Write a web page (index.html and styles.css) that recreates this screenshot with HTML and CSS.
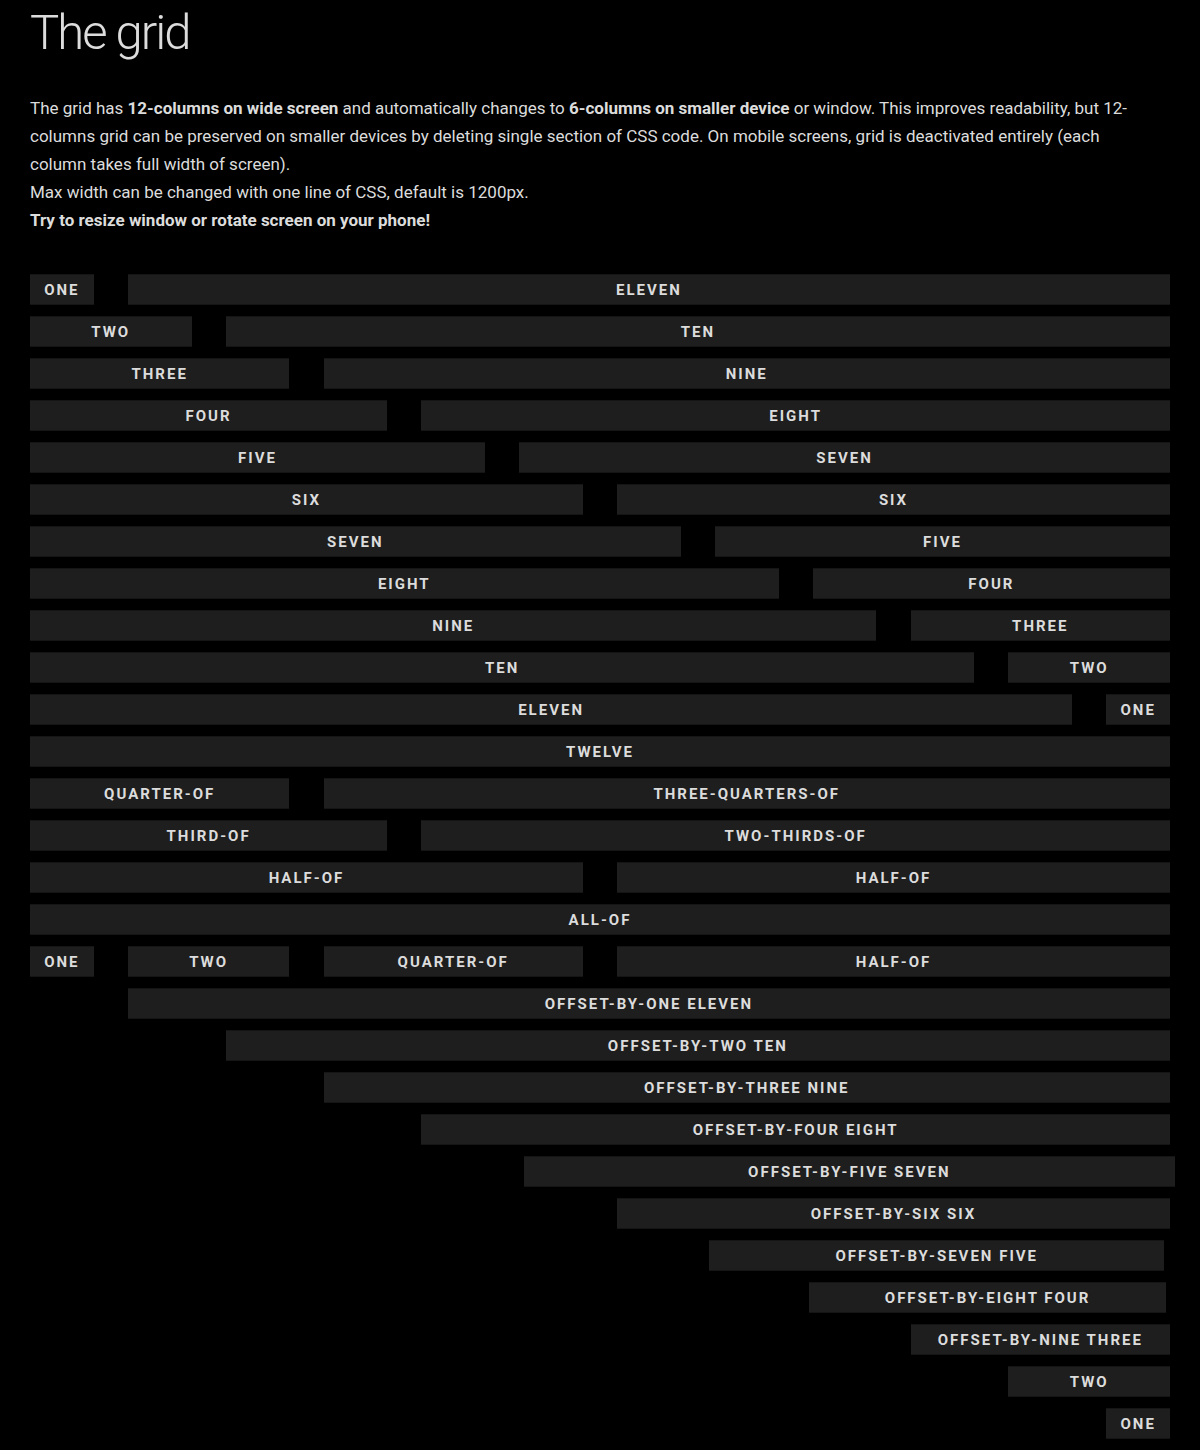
FILE: index.html
```html
<!DOCTYPE html>
<html lang="en">
<head>
<meta charset="utf-8">
<meta name="viewport" content="width=device-width, initial-scale=1">
<title>The grid</title>
<link rel="stylesheet" href="styles.css">
</head>
<body>
<main class="container">
  <h1 class="title">The grid</h1>
  <p class="intro">The grid has <strong>12-columns on wide screen</strong> and automatically changes to <strong>6-columns on smaller device</strong> or window. This improves readability, but 12-columns grid can be preserved on smaller devices by deleting single section of CSS code. On mobile screens, grid is deactivated entirely (each column takes full width of screen).<br>
  Max width can be changed with one line of CSS, default is 1200px.<br>
  <strong>Try to resize window or rotate screen on your phone!</strong></p>
  <section class="demo">
    <div class="row"><div class="col one">One</div><div class="col eleven">Eleven</div></div>
    <div class="row"><div class="col two">Two</div><div class="col ten">Ten</div></div>
    <div class="row"><div class="col three">Three</div><div class="col nine">Nine</div></div>
    <div class="row"><div class="col four">Four</div><div class="col eight">Eight</div></div>
    <div class="row"><div class="col five">Five</div><div class="col seven">Seven</div></div>
    <div class="row"><div class="col six">Six</div><div class="col six">Six</div></div>
    <div class="row"><div class="col seven">Seven</div><div class="col five">Five</div></div>
    <div class="row"><div class="col eight">Eight</div><div class="col four">Four</div></div>
    <div class="row"><div class="col nine">Nine</div><div class="col three">Three</div></div>
    <div class="row"><div class="col ten">Ten</div><div class="col two">Two</div></div>
    <div class="row"><div class="col eleven">Eleven</div><div class="col one">One</div></div>
    <div class="row"><div class="col twelve">Twelve</div></div>
    <div class="row"><div class="col three">Quarter-of</div><div class="col nine">Three-quarters-of</div></div>
    <div class="row"><div class="col four">Third-of</div><div class="col eight">Two-thirds-of</div></div>
    <div class="row"><div class="col six">Half-of</div><div class="col six">Half-of</div></div>
    <div class="row"><div class="col twelve">All-of</div></div>
    <div class="row"><div class="col one">One</div><div class="col two">Two</div><div class="col three">Quarter-of</div><div class="col six">Half-of</div></div>
    <div class="row"><div class="col offset-by-one eleven">Offset-by-one eleven</div></div>
    <div class="row"><div class="col offset-by-two ten">Offset-by-two ten</div></div>
    <div class="row"><div class="col offset-by-three nine">Offset-by-three nine</div></div>
    <div class="row"><div class="col offset-by-four eight">Offset-by-four eight</div></div>
    <div class="row"><div class="col offset-by-five seven">Offset-by-five seven</div></div>
    <div class="row"><div class="col offset-by-six six">Offset-by-six six</div></div>
    <div class="row"><div class="col offset-by-seven five">Offset-by-seven five</div></div>
    <div class="row"><div class="col offset-by-eight four">Offset-by-eight four</div></div>
    <div class="row"><div class="col offset-by-nine three">Offset-by-nine three</div></div>
    <div class="row"><div class="col offset-by-ten two">Two</div></div>
    <div class="row"><div class="col offset-by-eleven one">One</div></div>
  </section>
</main>
</body>
</html>
```
FILE: styles.css
```css
* { box-sizing: border-box; }

body {
  margin: 0;
  background: #000;
  color: #dcdcdc;
  font-family: Roboto, "Liberation Sans", sans-serif;
  font-size: 17px;
  line-height: 28px;
}

.container {
  max-width: 1200px;
  margin: 0 auto;
  padding: 3px 30px 12px;
}

.title {
  margin: 0 0 31px;
  font-size: 49px;
  line-height: 60px;
  font-weight: 300;
  letter-spacing: -2px;
}

.intro {
  margin: 0 0 40px;
  padding-right: 24px;
}

.demo {
  display: flex;
  flex-direction: column;
  gap: 11px;
}

.row {
  display: flex;
  column-gap: 3%;
}

.col {
  flex: none;
  padding-top: 2px;
  border: solid #151515;
  border-width: 1px 0;
  background: #1e1e1e;
  font-size: 15px;
  line-height: 27px;
  font-weight: 700;
  letter-spacing: 2px;
  text-align: center;
  text-transform: uppercase;
  white-space: nowrap;
}

.one { width: 5.5833%; }
.two { width: 14.1667%; }
.three { width: 22.75%; }
.four { width: 31.3333%; }
.five { width: 39.9167%; }
.six { width: 48.5%; }
.seven { width: 57.0833%; }
.eight { width: 65.6667%; }
.nine { width: 74.25%; }
.ten { width: 82.8333%; }
.eleven { width: 91.4167%; }
.twelve { width: 100%; }

.offset-by-one { margin-left: 8.5833%; }
.offset-by-two { margin-left: 17.1667%; }
.offset-by-three { margin-left: 25.75%; }
.offset-by-four { margin-left: 34.3333%; }
.offset-by-five { margin-left: 43.3333%; }
.offset-by-six { margin-left: 51.5%; }
.offset-by-seven { margin-left: 59.5833%; }
.offset-by-eight { margin-left: 68.3333%; }
.offset-by-nine { margin-left: 77.25%; }
.offset-by-ten { margin-left: 85.8333%; }
.offset-by-eleven { margin-left: 94.4167%; }

@media (max-width: 600px) {
  .row { flex-direction: column; row-gap: 11px; }
  .col { width: 100%; margin-left: 0; }
}
```
